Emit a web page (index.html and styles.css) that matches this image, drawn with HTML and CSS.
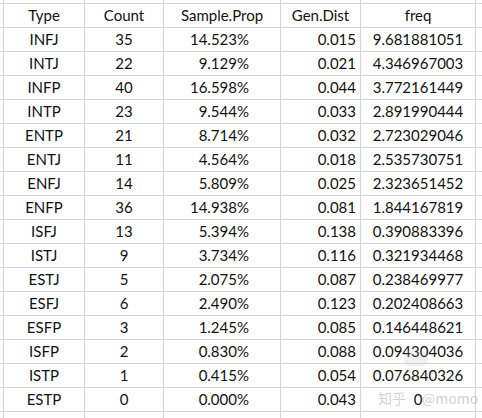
FILE: index.html
```html
<!DOCTYPE html>
<html lang="zh">
<head>
<meta charset="utf-8">
<title>MBTI table</title>
<link rel="stylesheet" href="styles.css">
</head>
<body>
<div class="sheet">
  <div class="c"></div><div class="c"></div><div class="c"></div><div class="c"></div><div class="c"></div><div class="c"></div><div class="c"></div>

  <div class="c"></div><div class="c ctr">Type</div><div class="c ctr">Count</div><div class="c ctr">Sample.Prop</div><div class="c ctr">Gen.Dist</div><div class="c ctr">freq</div><div class="c"></div>
  <div class="c"></div><div class="c ctr">INFJ</div><div class="c ctr">35</div><div class="c pct">14.523%</div><div class="c num">0.015</div><div class="c ctr">9.681881051</div><div class="c"></div>
  <div class="c"></div><div class="c ctr">INTJ</div><div class="c ctr">22</div><div class="c pct">9.129%</div><div class="c num">0.021</div><div class="c ctr">4.346967003</div><div class="c"></div>
  <div class="c"></div><div class="c ctr">INFP</div><div class="c ctr">40</div><div class="c pct">16.598%</div><div class="c num">0.044</div><div class="c ctr">3.772161449</div><div class="c"></div>
  <div class="c"></div><div class="c ctr">INTP</div><div class="c ctr">23</div><div class="c pct">9.544%</div><div class="c num">0.033</div><div class="c ctr">2.891990444</div><div class="c"></div>
  <div class="c"></div><div class="c ctr">ENTP</div><div class="c ctr">21</div><div class="c pct">8.714%</div><div class="c num">0.032</div><div class="c ctr">2.723029046</div><div class="c"></div>
  <div class="c"></div><div class="c ctr">ENTJ</div><div class="c ctr">11</div><div class="c pct">4.564%</div><div class="c num">0.018</div><div class="c ctr">2.535730751</div><div class="c"></div>
  <div class="c"></div><div class="c ctr">ENFJ</div><div class="c ctr">14</div><div class="c pct">5.809%</div><div class="c num">0.025</div><div class="c ctr">2.323651452</div><div class="c"></div>
  <div class="c"></div><div class="c ctr">ENFP</div><div class="c ctr">36</div><div class="c pct">14.938%</div><div class="c num">0.081</div><div class="c ctr">1.844167819</div><div class="c"></div>
  <div class="c"></div><div class="c ctr">ISFJ</div><div class="c ctr">13</div><div class="c pct">5.394%</div><div class="c num">0.138</div><div class="c ctr">0.390883396</div><div class="c"></div>
  <div class="c"></div><div class="c ctr">ISTJ</div><div class="c ctr">9</div><div class="c pct">3.734%</div><div class="c num">0.116</div><div class="c ctr">0.321934468</div><div class="c"></div>
  <div class="c"></div><div class="c ctr">ESTJ</div><div class="c ctr">5</div><div class="c pct">2.075%</div><div class="c num">0.087</div><div class="c ctr">0.238469977</div><div class="c"></div>
  <div class="c"></div><div class="c ctr">ESFJ</div><div class="c ctr">6</div><div class="c pct">2.490%</div><div class="c num">0.123</div><div class="c ctr">0.202408663</div><div class="c"></div>
  <div class="c"></div><div class="c ctr">ESFP</div><div class="c ctr">3</div><div class="c pct">1.245%</div><div class="c num">0.085</div><div class="c ctr">0.146448621</div><div class="c"></div>
  <div class="c"></div><div class="c ctr">ISFP</div><div class="c ctr">2</div><div class="c pct">0.830%</div><div class="c num">0.088</div><div class="c ctr">0.094304036</div><div class="c"></div>
  <div class="c"></div><div class="c ctr">ISTP</div><div class="c ctr">1</div><div class="c pct">0.415%</div><div class="c num">0.054</div><div class="c ctr">0.076840326</div><div class="c"></div>
  <div class="c"></div><div class="c ctr">ESTP</div><div class="c ctr">0</div><div class="c pct">0.000%</div><div class="c num">0.043</div><div class="c ctr">0</div><div class="c"></div>

  <div class="c"></div><div class="c"></div><div class="c"></div><div class="c"></div><div class="c"></div><div class="c"></div><div class="c"></div>
</div>
<div class="mark-logo"></div>
<div class="watermark"><span>知乎</span><span>@momo</span></div>
</body>
</html>
```
FILE: styles.css
```css
html, body {
  margin: 0;
  padding: 0;
  width: 482px;
  height: 418px;
  overflow: hidden;
  background: #fff;
}
body {
  position: relative;
  font-family: Lato, "Open Sans", "Noto Sans CJK SC", sans-serif;
  font-size: 15px;
  color: #111;
}
.sheet {
  display: grid;
  grid-template-columns: 3px 80px 78px 116px 79px 114px 20px;
  grid-template-rows: 3px repeat(17, 23px) 20px;
  gap: 1px;
  background: #d3d3d3;
  width: 482px;
  height: 418px;
  overflow: hidden;
}
.c {
  background: #fff;
  line-height: 23px;
  white-space: nowrap;
  overflow: hidden;
}
.ctr {
  text-align: center;
}
.pct {
  text-align: right;
  padding-right: 31px;
}
.num {
  text-align: right;
  padding-right: 4px;
}
.watermark {
  position: absolute;
  left: 378px;
  top: 389px;
  width: 102px;
  display: flex;
  gap: 16px;
  white-space: nowrap;
  font-family: "Noto Sans CJK SC", "Open Sans", sans-serif;
  font-size: 14px;
  line-height: 18px;
  color: rgba(150, 150, 150, 0.45);
}
.watermark span {
  flex-shrink: 0;
}
.mark-logo {
  position: absolute;
  left: 404px;
  top: 351px;
  width: 24px;
  height: 16px;
  border-radius: 8px;
  background: rgba(180, 180, 180, 0.18);
}
```
